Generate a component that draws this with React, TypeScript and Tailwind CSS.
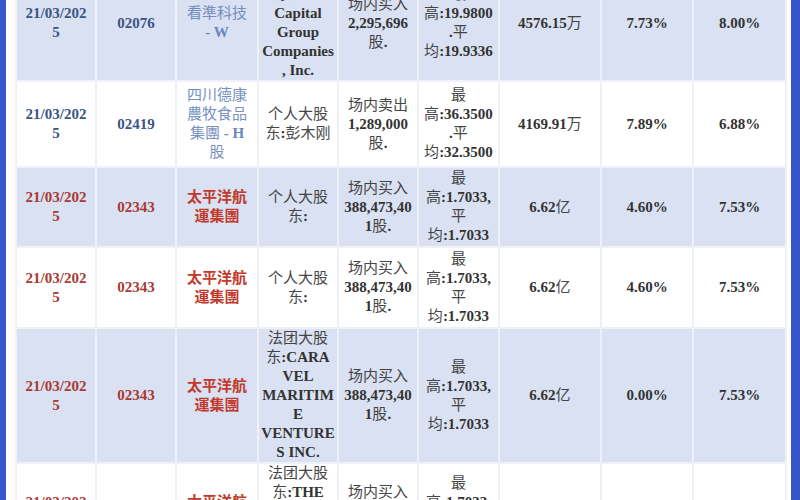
import React from 'react';

type Row = {
  h: string;
  shaded: boolean;
  tone: 'blue' | 'red';
  date: string[];
  code: string;
  name: string[];
  holder: string[];
  action: string[];
  price: string[];
  amount: string;
  p1: string;
  p2: string;
};

const rows: Row[] = [
  {
    h: 'h-[114px]', shaded: true, tone: 'blue',
    date: ['21/03/202', '5'], code: '02076', name: ['看準科技', '- W'],
    holder: ['法团大股', '东:The', 'Capital', 'Group', 'Companies', ', Inc.'],
    action: ['场内买入', '2,295,696', '股.'],
    price: ['最', '高:19.9800', '.平', '均:19.9336'],
    amount: '4576.15万', p1: '7.73%', p2: '8.00%',
  },
  {
    h: 'h-[86px]', shaded: false, tone: 'blue',
    date: ['21/03/202', '5'], code: '02419', name: ['四川德康', '農牧食品', '集團 - H', '股'],
    holder: ['个人大股', '东:彭木刚'],
    action: ['场内卖出', '1,289,000', '股.'],
    price: ['最', '高:36.3500', '.平', '均:32.3500'],
    amount: '4169.91万', p1: '7.89%', p2: '6.88%',
  },
  {
    h: 'h-[80px]', shaded: true, tone: 'red',
    date: ['21/03/202', '5'], code: '02343', name: ['太平洋航', '運集團'],
    holder: ['个人大股', '东:'],
    action: ['场内买入', '388,473,40', '1股.'],
    price: ['最', '高:1.7033,', '平', '均:1.7033'],
    amount: '6.62亿', p1: '4.60%', p2: '7.53%',
  },
  {
    h: 'h-[81px]', shaded: false, tone: 'red',
    date: ['21/03/202', '5'], code: '02343', name: ['太平洋航', '運集團'],
    holder: ['个人大股', '东:'],
    action: ['场内买入', '388,473,40', '1股.'],
    price: ['最', '高:1.7033,', '平', '均:1.7033'],
    amount: '6.62亿', p1: '4.60%', p2: '7.53%',
  },
  {
    h: 'h-[135px]', shaded: true, tone: 'red',
    date: ['21/03/202', '5'], code: '02343', name: ['太平洋航', '運集團'],
    holder: ['法团大股', '东:CARA', 'VEL', 'MARITIM', 'E', 'VENTURE', 'S INC.'],
    action: ['场内买入', '388,473,40', '1股.'],
    price: ['最', '高:1.7033,', '平', '均:1.7033'],
    amount: '6.62亿', p1: '0.00%', p2: '7.53%',
  },
  {
    h: 'h-[92px]', shaded: false, tone: 'red',
    date: ['21/03/202', '5'], code: '02343', name: ['太平洋航', '運集團'],
    holder: ['法团大股', '东:THE', 'CAPITAL', 'GROUP', 'INC.'],
    action: ['场内买入', '388,473,40', '1股.'],
    price: ['最', '高:1.7033,', '平', '均:1.7033'],
    amount: '6.62亿', p1: '0.00%', p2: '7.53%',
  },
];

// CJK runs are set lighter than the latin/digit runs, as in the source sheet
function Mixed({ text, heavy = false }: { text: string; heavy?: boolean }) {
  const parts = text.split(/([\u3400-\u9fff]+)/).filter(Boolean);
  return (
    <>
      {parts.map((p, i) =>
        /[\u3400-\u9fff]/.test(p) && !heavy ? (
          <span key={i} className="font-normal opacity-90">{p}</span>
        ) : (
          <span key={i}>{p}</span>
        )
      )}
    </>
  );
}

function Lines({ lines, heavy = false }: { lines: string[]; heavy?: boolean }) {
  return (
    <>
      {lines.map((l, i) => (
        <div key={i} className="whitespace-nowrap"><Mixed text={l} heavy={heavy} /></div>
      ))}
    </>
  );
}

const cell = 'border-2 border-[#eef1f7] px-0.5 py-0 text-center align-middle';

export default function App() {
  return (
    <div
      className="flex h-[500px] w-[800px] overflow-hidden bg-white text-[15px] leading-[19px] font-bold text-[#333333]"
      style={{ fontFamily: '"Liberation Serif", "Noto Sans CJK SC", serif' }}
    >
      <div className="w-[6px] shrink-0 bg-[#3556c9]" />
      <div className="w-[9px] shrink-0" />
      <div className="w-[770px] shrink-0">
        <table className="mt-[-36px] w-[770px] table-fixed border-collapse">
          <colgroup>
            <col className="w-[80px]" />
            <col className="w-[80px]" />
            <col className="w-[82px]" />
            <col className="w-[80px]" />
            <col className="w-[80px]" />
            <col className="w-[81px]" />
            <col className="w-[102px]" />
            <col className="w-[92px]" />
            <col className="w-[93px]" />
          </colgroup>
          <tbody>
            {rows.map((r, i) => {
              const red = r.tone === 'red';
              const idColor = red ? 'text-[#a83a34]' : 'text-[#3b5584]';
              const nameColor = red ? 'text-[#c23a2c]' : 'text-[#6a86bb]';
              return (
                <tr key={i} className={`${r.h} ${r.shaded ? 'bg-[#d9e1f2]' : 'bg-white'}`}>
                  <td className={`${cell} ${idColor}`}><Lines lines={r.date} /></td>
                  <td className={`${cell} ${idColor}`}>{r.code}</td>
                  <td className={`${cell} ${nameColor}`}><Lines lines={r.name} heavy={red} /></td>
                  <td className={cell}><Lines lines={r.holder} /></td>
                  <td className={cell}><Lines lines={r.action} /></td>
                  <td className={cell}><Lines lines={r.price} /></td>
                  <td className={cell}><Mixed text={r.amount} /></td>
                  <td className={cell}>{r.p1}</td>
                  <td className={cell}>{r.p2}</td>
                </tr>
              );
            })}
          </tbody>
        </table>
      </div>
      <div className="w-[6px] shrink-0" />
      <div className="w-[9px] shrink-0 bg-[#3556c9]" />
    </div>
  );
}
